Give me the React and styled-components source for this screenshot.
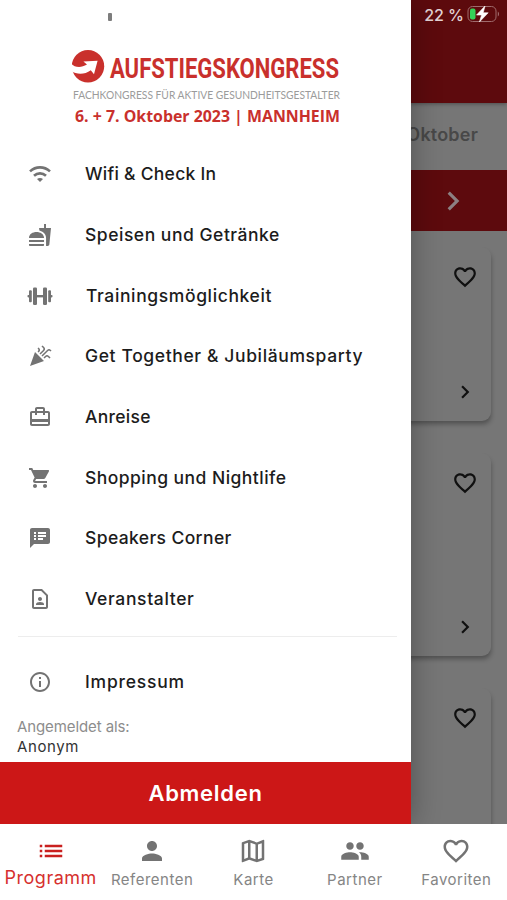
import styled, { createGlobalStyle } from "styled-components";
import {
  MdCardTravel,
  MdCelebration,
  MdChevronRight,
  MdFastfood,
  MdFavoriteBorder,
  MdInfoOutline,
  MdList,
  MdOutlineContactPage,
  MdOutlineMap,
  MdPeople,
  MdPerson,
  MdShoppingCart,
  MdSpeakerNotes,
} from "react-icons/md";

const menuItems = [
  { label: "Wifi & Check In", icon: WifiIcon, spacing: 0.27 },
  { label: "Speisen und Getränke", icon: MdFastfood, spacing: 0.52 },
  { label: "Trainingsmöglichkeit", icon: DumbbellIcon, spacing: 0.62, indent: 1 },
  { label: "Get Together & Jubiläumsparty", icon: MdCelebration, spacing: 0.62 },
  { label: "Anreise", icon: MdCardTravel, spacing: 0.3 },
  { label: "Shopping und Nightlife", icon: MdShoppingCart, spacing: 0.46 },
  { label: "Speakers Corner", icon: MdSpeakerNotes, spacing: 0.38 },
  { label: "Veranstalter", icon: MdOutlineContactPage, spacing: 0.64 },
];

const tabs = [
  { label: "Programm", icon: MdList, active: true },
  { label: "Referenten", icon: MdPerson },
  { label: "Karte", icon: MdOutlineMap },
  { label: "Partner", icon: MdPeople },
  { label: "Favoriten", icon: MdFavoriteBorder },
];

function WifiIcon() {
  return (
    <svg viewBox="0 0 24 24" width="24" height="24" fill="none" stroke="currentColor">
      <path d="M2 9.4C7.8 4 16.2 4 22 9.4" strokeWidth="2.6" />
      <path d="M6 13.8C9.5 10.5 14.5 10.5 18 13.8" strokeWidth="2.6" />
      <path d="M9 17.1C10.8 15.5 13.2 15.5 15 17.1L12 20Z" fill="currentColor" stroke="none" />
    </svg>
  );
}

function DumbbellIcon() {
  return (
    <svg viewBox="0 0 26 24" width="26" height="24" fill="currentColor">
      <rect x="0.5" y="11" width="2" height="2.4" rx="0.8" />
      <rect x="2" y="6.2" width="2.8" height="12" rx="1" />
      <rect x="6" y="3.4" width="4" height="17.6" rx="1.2" />
      <rect x="10" y="11" width="6" height="2.4" />
      <rect x="16" y="3.4" width="4" height="17.6" rx="1.2" />
      <rect x="21.2" y="6.2" width="2.8" height="12" rx="1" />
      <rect x="23.500" y="11" width="2" height="2.4" rx="0.8" />
    </svg>
  );
}

function Logo() {
  return (
    <LogoSvg width="270" height="78" viewBox="0 0 270 78">
      <circle cx="17" cy="17.3" r="16.2" fill="#c9302c" />
      <path
        d="M0 14.5C4 18.8 10 19.2 16 15.6L12.4 12.6L26.6 11.8L23 25.2L19.8 21.2C13.5 25.8 6 25.6 0 22Z"
        fill="#fff"
      />
      <LogoName x="39" y="28.6" textLength="229" lengthAdjust="spacingAndGlyphs">
        AUFSTIEGSKONGRESS
      </LogoName>
      <LogoClaim x="2" y="50" textLength="267" lengthAdjust="spacingAndGlyphs">
        FACHKONGRESS FÜR AKTIVE GESUNDHEITSGESTALTER
      </LogoClaim>
      <LogoDate x="4" y="72.5" textLength="265" lengthAdjust="spacingAndGlyphs">
        6. + 7. Oktober 2023 | MANNHEIM
      </LogoDate>
    </LogoSvg>
  );
}

function Battery() {
  return (
    <svg width="33" height="18" viewBox="0 0 33 18">
      <rect x="1" y="1.5" width="28" height="15" rx="4.5" fill="none" stroke="#a06b6d" />
      <path d="M30.8 6.5v5c1.6-.7 1.6-4.3 0-5Z" fill="#a06b6d" />
      <rect x="3" y="3.5" width="5.5" height="11" rx="2" fill="#34d158" />
      <path
        d="M18 1L9.5 10H14.6L12.4 17L21.2 7.8H16.2Z"
        fill="#fff"
        stroke="#fff"
        strokeWidth="0.6"
      />
    </svg>
  );
}

function Program() {
  return (
    <ProgramWrapper>
      <AppBar>
        <span>22 %</span>
        <Battery />
      </AppBar>
      <DayBar>7. Oktober</DayBar>
      <SlotBar>
        <MdChevronRight />
      </SlotBar>
      <CardList>
        {[174, 203, 203].map((height, i) => (
          <Card key={i} $height={height}>
            <MdFavoriteBorder />
            <MdChevronRight />
          </Card>
        ))}
      </CardList>
    </ProgramWrapper>
  );
}

function Drawer() {
  return (
    <DrawerWrapper>
      <DrawerHeader>
        <Notch />
        <Logo />
      </DrawerHeader>
      <Menu>
        {menuItems.map(({ label, icon: Icon, spacing, indent }) => (
          <MenuItem key={label}>
            <IconBox>
              <Icon />
            </IconBox>
            <MenuLabel $spacing={spacing} $indent={indent}>
              {label}
            </MenuLabel>
          </MenuItem>
        ))}
      </Menu>
      <Divider />
      <Imprint>
        <IconBox>
          <MdInfoOutline />
        </IconBox>
        <MenuLabel $spacing={0.8}>Impressum</MenuLabel>
      </Imprint>
      <Account>
        <AccountHint>Angemeldet als:</AccountHint>
        <AccountName>Anonym</AccountName>
      </Account>
      <LogoutButton>Abmelden</LogoutButton>
    </DrawerWrapper>
  );
}

function App() {
  return (
    <>
      <GlobalStyle />
      <Screen>
        <Stage>
          <Program />
          <Drawer />
        </Stage>
        <TabBar>
          {tabs.map(({ label, icon: Icon, active }) => (
            <Tab key={label} $active={active}>
              <Icon />
              <TabLabel $active={active}>{label}</TabLabel>
            </Tab>
          ))}
        </TabBar>
      </Screen>
    </>
  );
}

export default App;

const GlobalStyle = createGlobalStyle`
  * {
    box-sizing: border-box;
  }

  body {
    margin: 0;
    font-family: Inter, "Liberation Sans", sans-serif;
  }

  svg {
    display: block;
    flex-shrink: 0;
  }
`;

const Screen = styled.div`
  display: flex;
  flex-direction: column;
  width: 507px;
  height: 900px;
  overflow: hidden;
  background: #fff;
`;

const Stage = styled.div`
  position: relative;
  height: 824px;
  overflow: hidden;
`;

const ProgramWrapper = styled.div`
  display: flex;
  flex-direction: column;
  height: 100%;
  background: #767676;
`;

const AppBar = styled.div`
  display: flex;
  justify-content: flex-end;
  align-items: flex-start;
  gap: 3px;
  flex-shrink: 0;
  height: 103px;
  padding: 5px 7px 0 0;
  background: #5d0a0d;
  color: #e3d3d4;
  font-size: 16px;
  font-weight: 500;
  line-height: 20px;
  box-shadow: 0 1px 4px rgba(0, 0, 0, 0.35);
  z-index: 1;
`;

const DayBar = styled.div`
  display: flex;
  justify-content: flex-end;
  align-items: center;
  flex-shrink: 0;
  height: 67px;
  padding: 0 29px 5px 0;
  color: #484848;
  font-size: 18px;
  font-weight: 600;
  letter-spacing: 0.2px;
`;

const SlotBar = styled.div`
  display: flex;
  justify-content: flex-end;
  align-items: center;
  flex-shrink: 0;
  height: 61px;
  padding-right: 35px;
  background: #5d0a0d;
  color: #8c8082;
  font-size: 38px;
`;

const CardList = styled.div`
  display: flex;
  flex-direction: column;
  gap: 32px;
  padding: 16px 16px 0;
`;

const Card = styled.div`
  display: flex;
  flex-direction: column;
  justify-content: space-between;
  align-items: flex-end;
  flex-shrink: 0;
  height: ${({ $height }) => $height}px;
  padding: 17px 13px 16px;
  border-radius: 9px;
  background: #767676;
  box-shadow: 1px 4px 5px -1px rgba(0, 0, 0, 0.32);
  color: #101010;
  font-size: 26px;
`;

const DrawerWrapper = styled.aside`
  position: absolute;
  top: 0;
  left: 0;
  z-index: 2;
  display: flex;
  flex-direction: column;
  width: 411px;
  height: 100%;
  background: #fff;
  box-shadow: 0 0 28px rgba(0, 0, 0, 0.32);
`;

const DrawerHeader = styled.div`
  display: flex;
  flex-direction: column;
  gap: 28px;
  height: 144px;
  padding: 13px 0 0 71px;
`;

const Notch = styled.div`
  width: 4px;
  height: 8px;
  margin-left: 37px;
  border-radius: 1px;
  background: #7d7d7d;
`;

const LogoSvg = styled.svg`
  overflow: visible;
`;

const LogoName = styled.text`
  fill: #c9302c;
  font-family: Roboto, sans-serif;
  font-size: 27.5px;
  font-weight: 700;
`;

const LogoClaim = styled.text`
  fill: #9b9b9b;
  font-family: Lato, sans-serif;
  font-size: 10.5px;
`;

const LogoDate = styled.text`
  fill: #c9302c;
  font-family: "Open Sans", sans-serif;
  font-size: 16px;
  font-weight: 700;
`;

const Menu = styled.nav`
  display: flex;
  flex-direction: column;
`;

const MenuItem = styled.div`
  display: flex;
  align-items: center;
  height: 60.7px;
  padding-left: 26px;
`;

const IconBox = styled.span`
  display: flex;
  justify-content: center;
  width: 28px;
  color: #737373;
  font-size: 24px;
`;

const MenuLabel = styled.span`
  margin-left: ${({ $indent = 0 }) => 31 + $indent}px;
  padding-bottom: 1px;
  color: #1c1c1c;
  font-size: 17.5px;
  font-weight: 500;
  letter-spacing: ${({ $spacing }) => $spacing}px;
  white-space: nowrap;
`;

const Divider = styled.div`
  height: 1px;
  margin: 6px 14px 0 18px;
  background: #ededed;
`;

const Imprint = styled(MenuItem)`
  margin-top: 15px;
`;

const Account = styled.div`
  display: flex;
  flex-direction: column;
  flex: 1;
  padding: 5px 0 0 17px;
  font-size: 15px;
  line-height: 20px;
`;

const AccountHint = styled.span`
  color: #8d8d8d;
  letter-spacing: -0.1px;
`;

const AccountName = styled.span`
  color: #333;
  letter-spacing: 0.6px;
`;

const LogoutButton = styled.button`
  flex-shrink: 0;
  height: 62px;
  border: 0;
  background: #cc1717;
  color: #fff;
  font-family: inherit;
  font-size: 22px;
  font-weight: 600;
  letter-spacing: 0.7px;
`;

const TabBar = styled.nav`
  display: grid;
  grid-template-columns: repeat(5, 1fr);
  height: 76px;
  background: #fff;
`;

const Tab = styled.div`
  display: flex;
  flex-direction: column;
  align-items: center;
  padding-top: 12px;
  color: ${({ $active }) => ($active ? "#c9201f" : "#737373")};
  font-size: 30px;
`;

const TabLabel = styled.span`
  margin-top: ${({ $active }) => ($active ? 1 : 3)}px;
  color: ${({ $active }) => ($active ? "#d6302e" : "#858585")};
  font-size: ${({ $active }) => ($active ? 18 : 15)}px;
  line-height: 22px;
  letter-spacing: 0.5px;
`;
